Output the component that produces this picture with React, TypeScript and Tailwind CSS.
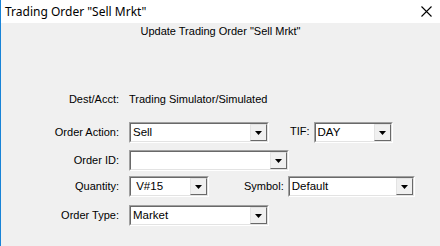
import React from "react";

const FONT = "font-['Tahoma','Liberation_Sans',sans-serif]";
const LABEL_CLS = "w-[118px] shrink-0 text-right text-[11px] text-black";
const TEXT_CLS = "text-[11px] text-black";

function Combo({ value, width }: { value: string; width: number }) {
  return (
    <div
      className="h-[21px] flex border-t border-l border-t-[#a0a0a0] border-l-[#a0a0a0] border-b border-r border-b-white border-r-white"
      style={{ width }}
    >
      <div className="flex-1 flex border-t border-l border-t-[#696969] border-l-[#696969] border-b border-r border-b-[#e3e3e3] border-r-[#e3e3e3] bg-white">
        <div className="flex-1 pl-[2px] text-[11.5px] leading-[17px] text-black overflow-hidden whitespace-pre">
          {value}
        </div>
        <div className="w-[17px] h-full flex items-center justify-center bg-[#f0f0f0] border-t border-l border-t-[#e3e3e3] border-l-[#e3e3e3] border-b border-r border-b-[#696969] border-r-[#696969]">
          <svg width="7" height="4" viewBox="0 0 7 4">
            <path d="M0 0h7L3.5 4z" fill="#000" />
          </svg>
        </div>
      </div>
    </div>
  );
}

export default function App() {
  return (
    <div className={`w-[440px] h-[246px] bg-[#f0f0f0] border-l border-l-[#1883d7] flex flex-col ${FONT}`}>
      {/* Title bar */}
      <div className="h-[23px] bg-white flex items-center justify-between pl-[4px] pr-[8px]">
        <span className="text-[12px] text-black font-['Noto_Sans','Liberation_Sans',sans-serif]">
          Trading Order "Sell Mrkt"
        </span>
        <svg width="11" height="11" viewBox="0 0 11 11">
          <path d="M0.5 0.5L10.5 10.5M10.5 0.5L0.5 10.5" stroke="#000" strokeWidth="1.1" />
        </svg>
      </div>

      <div className={`text-center ${TEXT_CLS} mt-[1px] leading-[14px]`}>
        Update Trading Order "Sell Mrkt"
      </div>

      <div className="flex flex-col mt-[54px]">
        {/* Dest/Acct */}
        <div className="flex items-center h-[14px]">
          <span className={LABEL_CLS}>Dest/Acct:</span>
          <span className={`ml-[10px] ${TEXT_CLS}`}>Trading Simulator/Simulated</span>
        </div>

        {/* Order Action + TIF */}
        <div className="flex items-center mt-[16px]">
          <span className={LABEL_CLS}>Order Action:</span>
          <div className="ml-[10px]">
            <Combo value="Sell" width={140} />
          </div>
          <span className={`ml-[21px] mb-[3px] ${TEXT_CLS}`}>TIF:</span>
          <div className="ml-[4px]">
            <Combo value="DAY" width={79} />
          </div>
        </div>

        {/* Order ID */}
        <div className="flex items-center mt-[7px]">
          <span className={LABEL_CLS}>Order ID:</span>
          <div className="ml-[10px]">
            <Combo value="" width={160} />
          </div>
        </div>

        {/* Quantity + Symbol */}
        <div className="flex items-center mt-[5px]">
          <span className={LABEL_CLS}>Quantity:</span>
          <div className="ml-[10px]">
            <Combo value=" V#15" width={80} />
          </div>
          <span className={`ml-[35px] ${TEXT_CLS}`}>Symbol:</span>
          <div className="ml-[4px]">
            <Combo value="Default" width={127} />
          </div>
        </div>

        {/* Order Type */}
        <div className="flex items-center mt-[8px]">
          <span className={LABEL_CLS}>Order Type:</span>
          <div className="ml-[10px]">
            <Combo value="Market" width={140} />
          </div>
        </div>
      </div>
    </div>
  );
}
